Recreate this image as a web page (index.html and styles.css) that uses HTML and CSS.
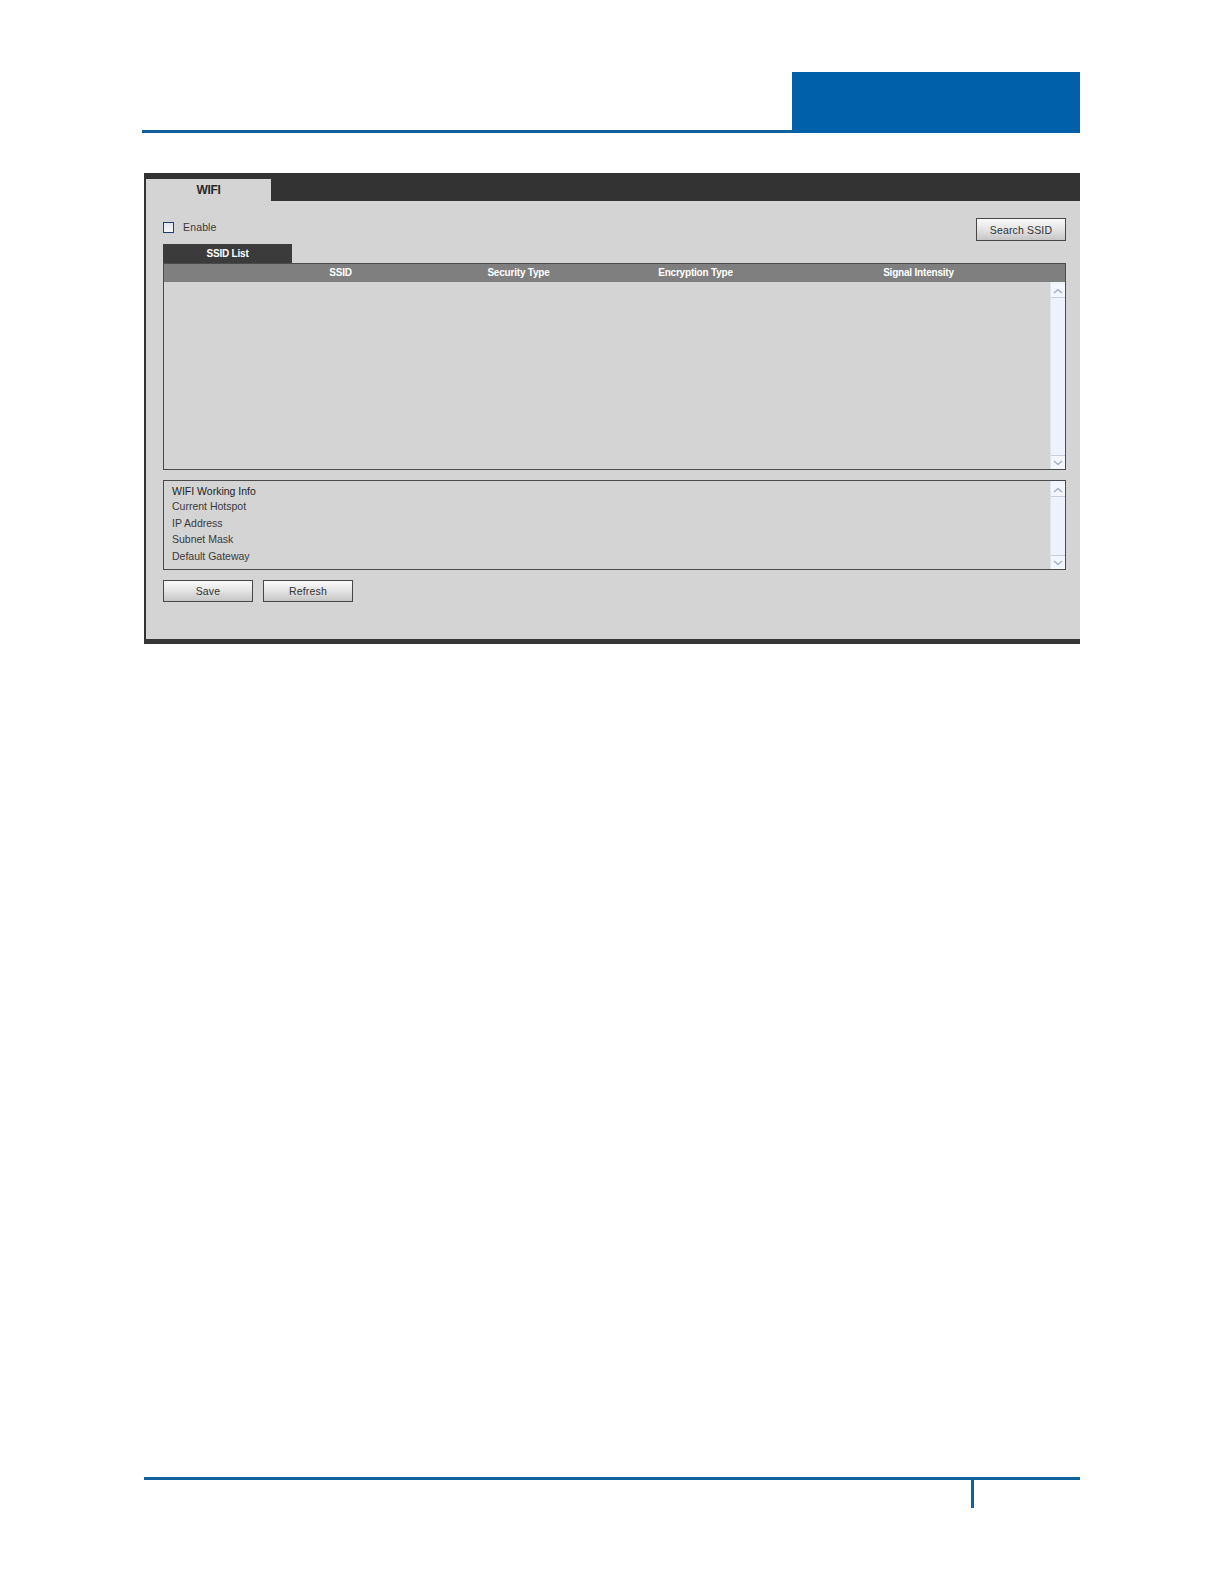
FILE: index.html
```html
<!DOCTYPE html>
<html lang="en">
<head>
<meta charset="utf-8">
<title>WIFI</title>
<link rel="stylesheet" href="styles.css">
</head>
<body>
<div class="page">
  <header class="head">
    <div class="rule"></div>
    <div class="headblock"></div>
  </header>

  <section class="panel">
    <div class="panel-top">
      <div class="main-tab">WIFI</div>
    </div>
    <div class="panel-body">
      <div class="row-top">
        <label class="enable"><span class="check"></span><span>Enable</span></label>
        <button class="btn">Search SSID</button>
      </div>

      <div class="sub-tab">SSID List</div>
      <div class="table">
        <div class="thead">
          <span></span>
          <span>SSID</span>
          <span>Security Type</span>
          <span>Encryption Type</span>
          <span>Signal Intensity</span>
          <span></span>
        </div>
        <div class="tbody">
          <div class="rows"></div>
          <div class="scroll">
            <div class="sb-up"><svg width="10" height="6" viewBox="0 0 10 6"><path d="M1 5 L5 1.5 L9 5" fill="none" stroke="#9aa9c2" stroke-width="1.2"/></svg></div>
            <div class="sb-track"></div>
            <div class="sb-down"><svg width="10" height="6" viewBox="0 0 10 6"><path d="M1 1 L5 4.5 L9 1" fill="none" stroke="#9aa9c2" stroke-width="1.2"/></svg></div>
          </div>
        </div>
      </div>

      <div class="info">
        <div class="info-text">
          <div class="info-title">WIFI Working Info</div>
          <div class="info-line">Current Hotspot</div>
          <div class="info-line">IP Address</div>
          <div class="info-line">Subnet Mask</div>
          <div class="info-line">Default Gateway</div>
        </div>
        <div class="scroll">
          <div class="sb-up"><svg width="10" height="6" viewBox="0 0 10 6"><path d="M1 5 L5 1.5 L9 5" fill="none" stroke="#9aa9c2" stroke-width="1.2"/></svg></div>
          <div class="sb-track"></div>
          <div class="sb-down"><svg width="10" height="6" viewBox="0 0 10 6"><path d="M1 1 L5 4.5 L9 1" fill="none" stroke="#9aa9c2" stroke-width="1.2"/></svg></div>
        </div>
      </div>

      <div class="actions">
        <button class="btn">Save</button>
        <button class="btn">Refresh</button>
      </div>
    </div>
  </section>

  <footer class="foot">
    <div class="foot-rule"></div>
    <div class="foot-tick"></div>
  </footer>
</div>
</body>
</html>
```

FILE: styles.css
```css
html, body {
  margin: 0;
  padding: 0;
  background: #ffffff;
}

body {
  font-family: "Liberation Sans", Arial, sans-serif;
  font-size: 10.5px;
  color: #333333;
}

.page {
  width: 938px;
  margin-left: 142px;
  padding-top: 72px;
}

/* header */
.head {
  display: flex;
  align-items: flex-end;
  height: 61px;
}

.rule {
  flex: 1;
  height: 3px;
  background: #11609e;
}

.headblock {
  width: 288px;
  height: 61px;
  background: #0060a9;
}

/* panel */
.panel {
  margin-top: 40px;
  margin-left: 2px;
  width: 934px;
  border-left: 2px solid #333333;
  border-bottom: 5px solid #363636;
  background: #d4d4d4;
}

.panel-top {
  height: 22px;
  padding-top: 6px;
  background: #333333;
  display: flex;
}

.main-tab {
  width: 125px;
  height: 22px;
  background: #d4d4d4;
  color: #2a2a2a;
  font-size: 12px;
  font-weight: bold;
  letter-spacing: -0.3px;
  line-height: 23px;
  text-align: center;
}

.panel-body {
  padding: 17px 14px 37px 17px;
}

.row-top {
  display: flex;
  justify-content: space-between;
  align-items: flex-start;
  height: 23px;
}

.enable {
  display: flex;
  align-items: center;
  gap: 9px;
  margin-top: 3px;
  color: #3a3a3a;
  letter-spacing: 0.15px;
}

.check {
  display: block;
  width: 9px;
  height: 9px;
  border: 1px solid #203d6e;
  background: linear-gradient(#dfe3ea, #f6f7f9);
}

.btn {
  display: block;
  width: 90px;
  height: 23px;
  padding: 0;
  margin: 0;
  border: 1px solid #474747;
  background: linear-gradient(#fafafa 0%, #e6e6e6 45%, #c6c6c6 100%);
  font-family: "Liberation Sans", Arial, sans-serif;
  font-size: 10.5px;
  letter-spacing: 0.15px;
  color: #333333;
  text-align: center;
  line-height: 20px;
}

.sub-tab {
  margin-top: 3px;
  width: 129px;
  height: 19px;
  background: #3b3b3b;
  color: #ffffff;
  font-weight: bold;
  font-size: 10px;
  letter-spacing: -0.2px;
  line-height: 19px;
  text-align: center;
}

/* table */
.table {
  border: 1px solid #4a4a4a;
}

.thead {
  display: grid;
  grid-template-columns: 88px 177px 179px 175px 271px 1fr;
  height: 18px;
  background: #7f7f7f;
  color: #ffffff;
  font-weight: bold;
  font-size: 10px;
  letter-spacing: -0.2px;
  line-height: 18px;
  text-align: center;
}

.tbody {
  display: flex;
  height: 187px;
}

.rows {
  flex: 1;
}

.scroll {
  width: 14px;
  display: flex;
  flex-direction: column;
  background: #eef2fa;
  border-left: 1px solid #dfe4ee;
}

.sb-up, .sb-down {
  height: 13px;
  display: flex;
  align-items: center;
  justify-content: center;
  background: #f3f6fc;
}

.sb-up {
  border-bottom: 1px solid #c5cfdf;
  margin-top: 2px;
}

.sb-down {
  border-top: 1px solid #c5cfdf;
}

.sb-track {
  flex: 1;
}

/* info box */
.info {
  margin-top: 10px;
  height: 88px;
  border: 1px solid #4a4a4a;
  display: flex;
}

.info-text {
  flex: 1;
  padding: 3px 0 0 8px;
}

.info-title {
  line-height: 14px;
  color: #222222;
}

.info-line {
  line-height: 16.6px;
  color: #3a3a3a;
}

/* buttons */
.actions {
  margin-top: 10px;
  display: flex;
  gap: 10px;
}

.actions .btn {
  height: 22px;
  line-height: 19px;
}

/* footer */
.foot {
  margin-top: 833px;
  margin-left: 2px;
  width: 936px;
}

.foot-rule {
  height: 3px;
  background: #11609e;
}

.foot-tick {
  margin-left: 827px;
  width: 3px;
  height: 28px;
  background: #11609e;
}
```
